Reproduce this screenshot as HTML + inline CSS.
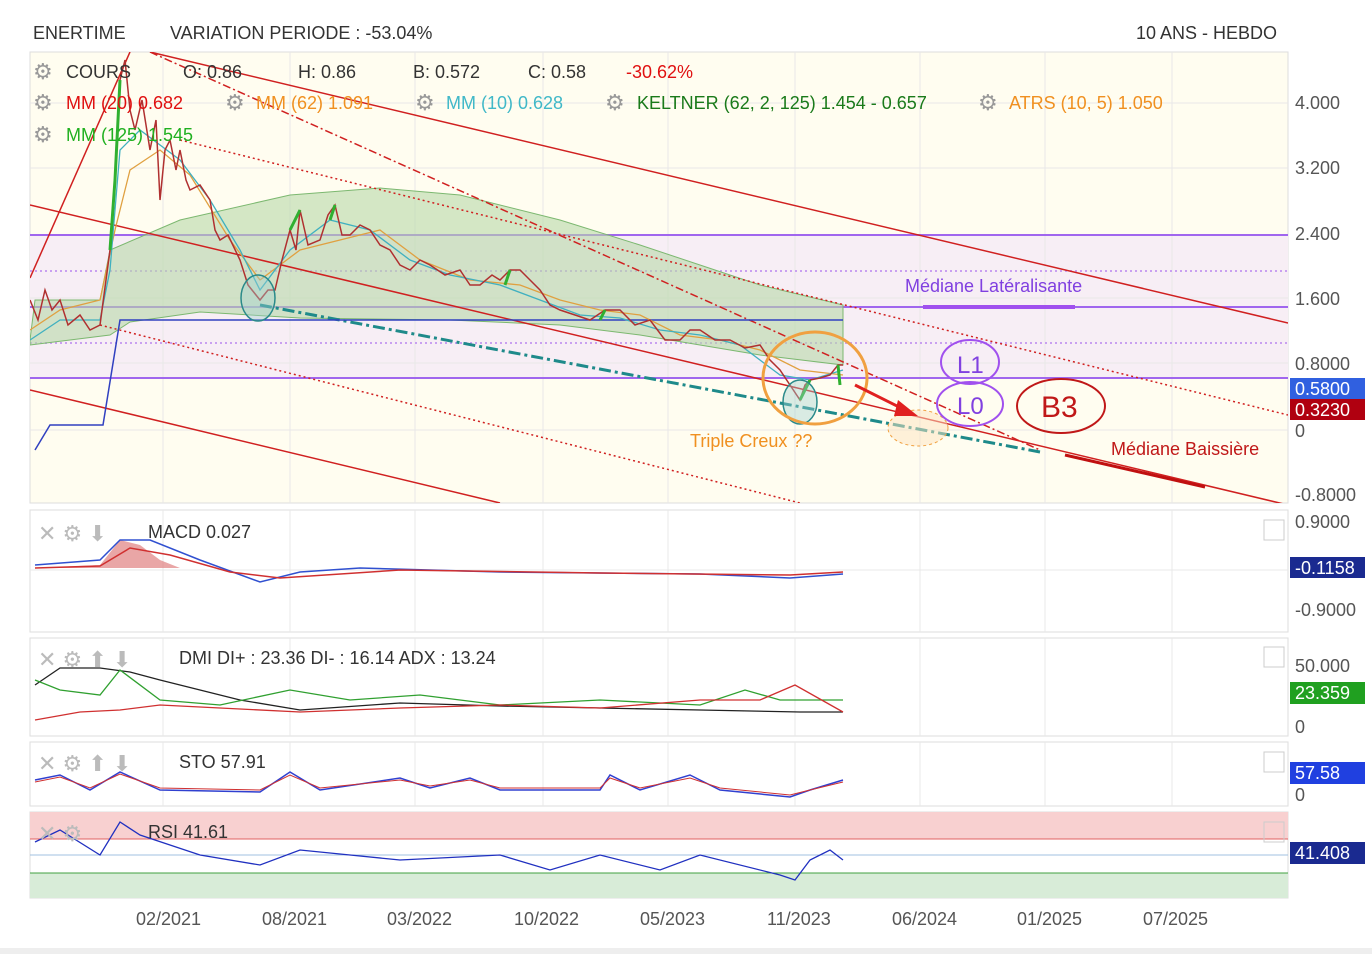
<!DOCTYPE html>
<html><head><meta charset="utf-8"><style>
body{margin:0;width:1372px;height:954px;background:#fff;font-family:"Liberation Sans",sans-serif;overflow:hidden;position:relative}
.t{position:absolute;font-size:18px;white-space:nowrap;color:#333}
</style></head><body>
<div class="t" style="left:33px;top:23px">ENERTIME</div>
<div class="t" style="left:170px;top:23px">VARIATION PERIODE : -53.04%</div>
<div class="t" style="left:1136px;top:23px">10 ANS - HEBDO</div>
<svg width="1372" height="954" style="position:absolute;left:0;top:0" font-family="Liberation Sans, sans-serif">
<defs><clipPath id="m"><rect x="30" y="52" width="1258" height="451"/></clipPath></defs>
<rect x="30" y="52" width="1258" height="451" fill="#fffdf0" stroke="#ddd"/>
<g clip-path="url(#m)">
<rect x="30" y="235" width="1258" height="143" fill="#f7eef5"/>
<g stroke="#e8e8e8"><path d="M163 52V503M290 52V503M415 52V503M543 52V503M668 52V503M795 52V503M920 52V503M1045 52V503M1172 52V503M30 103H1288M30 168H1288M30 298H1288M30 363H1288M30 430H1288"/></g>
<path d="M30 235H1288M30 307H1288M30 378H1288" stroke="#a066ee" stroke-width="2"/>
<path d="M30 271H1288M30 343H1288" stroke="#c9a0f0" stroke-width="2" stroke-dasharray="2 3"/>
<path d="M30 340 L35 300 L100 300 L110 250 L180 220 L290 195 L380 188 L460 195 L560 220 L640 245 L700 265 L760 285 L843 305 L843 365 L760 355 L700 345 L640 335 L560 325 L450 320 L300 318 L200 312 L130 322 L110 335 L30 345Z" fill="#b8d8a8" fill-opacity=".6" stroke="#7cb870"/>
<g stroke="#d02020" stroke-width="1.5" fill="none">
<path d="M150 52L1288 323"/><path d="M30 205L1288 505"/><path d="M30 390L500 503"/><path d="M30 278L130 52"/>
<path d="M180 140L1288 415" stroke-dasharray="2 3"/><path d="M100 325L800 503" stroke-dasharray="2 3"/>
<path d="M150 52L1040 450" stroke-dasharray="8 3 2 3"/>
</g>
<path d="M1065 455L1205 487" stroke="#c01010" stroke-width="3"/>
<path d="M260 305L1040 452" stroke="#1e8a8a" stroke-width="3" stroke-dasharray="12 4 3 4"/>
<path d="M35 450L50 425L103 425L120 320L843 320" stroke="#3040c0" stroke-width="1.5" fill="none"/>
<path d="M30 330L60 310L100 300L115 230L130 170L160 150L190 175L230 240L260 280L300 250L340 240L380 230L420 260L470 280L520 285L560 300L600 310L640 315L680 335L720 340L760 350L800 370L843 375" stroke="#e0a040" fill="none" stroke-width="1.3"/>
<path d="M30 340L60 320L100 320L110 270L120 150L140 130L180 160L210 200L240 250L260 290L290 250L330 220L370 230L410 260L450 275L500 285L540 300L580 315L620 318L660 330L700 335L740 345L780 375L810 380L843 370" stroke="#40b0c0" fill="none" stroke-width="1.3"/>
<path d="M30 300L38 320L45 290L52 310L60 300L68 325L80 315L90 330L100 325L110 250L115 180L120 80L125 60L130 110L135 130L142 100L150 150L156 120L160 200L165 150L170 140L176 170L180 150L186 180L190 190L200 185L210 200L215 230L220 240L228 235L240 260L248 285L260 300L268 290L275 290L282 260L290 230L296 250L300 210L308 245L320 240L328 215L335 205L342 235L350 235L360 225L370 230L380 245L390 250L400 265L410 270L420 260L430 265L445 275L460 270L470 285L480 285L492 275L500 280L510 270L520 270L530 280L540 290L550 305L560 310L575 315L590 320L605 310L620 310L635 325L650 320L665 340L680 340L690 330L700 330L715 340L730 340L745 348L760 345L770 360L780 370L790 385L800 400L805 385L810 380L820 378L830 375L838 365L843 365" stroke="#b03030" fill="none" stroke-width="1.5"/>
<path d="M110 250L115 180L120 80M290 230L300 210M335 205L330 220M800 400L810 380M605 310L600 320M510 270L505 285M838 365L840 385" stroke="#30b030" stroke-width="3" fill="none"/>
<ellipse cx="258" cy="298" rx="17" ry="23" fill="#a0d0d0" fill-opacity=".4" stroke="#2a8a8a" stroke-width="1.5"/>
<ellipse cx="800" cy="402" rx="17" ry="22" fill="#a0d0d0" fill-opacity=".4" stroke="#2a8a8a" stroke-width="1.5"/>
<ellipse cx="815" cy="378" rx="52" ry="46" fill="none" stroke="#f0a040" stroke-width="3"/>
<ellipse cx="918" cy="428" rx="30" ry="18" fill="#fde4c0" fill-opacity=".5" stroke="#f0a040" stroke-dasharray="3 3"/>
<path d="M855 385L905 410" stroke="#e02020" stroke-width="3"/><path d="M898 400L918 416L894 416Z" fill="#e02020"/>
<path d="M923 307H1075" stroke="#a050ee" stroke-width="4"/>
<ellipse cx="970" cy="362" rx="29" ry="22" fill="none" stroke="#a050ee" stroke-width="2"/>
<ellipse cx="970" cy="404" rx="33" ry="22" fill="none" stroke="#a050ee" stroke-width="2"/>
<ellipse cx="1061" cy="406" rx="44" ry="27" fill="none" stroke="#c01818" stroke-width="2"/>
</g>
<g font-size="18">
<text x="905" y="292" fill="#8040e0">Médiane Latéralisante</text>
<text x="957" y="373" fill="#8040e0" font-size="24">L1</text>
<text x="957" y="414" fill="#8040e0" font-size="24">L0</text>
<text x="1041" y="417" fill="#c01818" font-size="30">B3</text>
<text x="690" y="447" fill="#f09020">Triple Creux ??</text>
<text x="1111" y="455" fill="#c01818">Médiane Baissière</text>
<text x="66" y="78" fill="#333">COURS</text><text x="183" y="78" fill="#333">O: 0.86</text><text x="298" y="78" fill="#333">H: 0.86</text><text x="413" y="78" fill="#333">B: 0.572</text><text x="528" y="78" fill="#333">C: 0.58</text><text x="626" y="78" fill="#e01010">-30.62%</text>
<text x="66" y="109" fill="#e01010">MM (20) 0.682</text><text x="256" y="109" fill="#f09020">MM (62) 1.091</text><text x="446" y="109" fill="#40b8c8">MM (10) 0.628</text><text x="637" y="109" fill="#1a7a1a">KELTNER (62, 2, 125) 1.454 - 0.657</text><text x="1009" y="109" fill="#f09020">ATRS (10, 5) 1.050</text>
<text x="66" y="141" fill="#20b020">MM (125) 1.545</text>
<g fill="#999" font-size="22"><text x="33" y="79">⚙</text><text x="33" y="110">⚙</text><text x="225" y="110">⚙</text><text x="415" y="110">⚙</text><text x="605" y="110">⚙</text><text x="978" y="110">⚙</text><text x="33" y="142">⚙</text></g>
<g fill="#555"><text x="1295" y="109">4.000</text><text x="1295" y="174">3.200</text><text x="1295" y="240">2.400</text><text x="1295" y="305">1.600</text><text x="1295" y="370">0.8000</text><text x="1295" y="437">0</text><text x="1295" y="501">-0.8000</text>
<text x="1295" y="528">0.9000</text><text x="1295" y="616">-0.9000</text><text x="1295" y="672">50.000</text><text x="1295" y="733">0</text><text x="1295" y="801">0</text></g>
</g>
<rect x="1290" y="378" width="75" height="21" fill="#3060e0"/><text x="1295" y="395" fill="#fff" font-size="18">0.5800</text>
<rect x="1290" y="399" width="75" height="21" fill="#b00010"/><text x="1295" y="416" fill="#fff" font-size="18">0.3230</text>
<!-- MACD -->
<rect x="30" y="510" width="1258" height="122" fill="#fff" stroke="#ddd"/>
<path d="M163 510V632M290 510V632M415 510V632M543 510V632M668 510V632M795 510V632M920 510V632M1045 510V632M1172 510V632M30 570H1288" stroke="#e8e8e8"/>
<path d="M35 568L100 565L120 540L140 545L160 560L180 568L40 568Z" fill="#e08080" opacity=".7"/>
<path d="M35 565L100 560L120 540L150 540L200 560L260 582L300 572L360 568L500 572L700 574L790 578L843 574" stroke="#3050d0" fill="none" stroke-width="1.5"/>
<path d="M35 568L100 566L130 548L170 555L230 572L280 578L400 570L600 573L790 575L843 572" stroke="#d03030" fill="none" stroke-width="1.5"/>
<rect x="1264" y="520" width="20" height="20" fill="none" stroke="#ccc"/>
<text x="148" y="538" font-size="18" fill="#333">MACD  0.027</text>
<text x="38" y="541" font-size="22" fill="#bbb">✕ ⚙ ⬇</text>
<rect x="1290" y="557" width="75" height="21" fill="#1a2a90"/><text x="1295" y="574" fill="#fff" font-size="18">-0.1158</text>
<!-- DMI -->
<rect x="30" y="638" width="1258" height="98" fill="#fff" stroke="#ddd"/>
<path d="M163 638V736M290 638V736M415 638V736M543 638V736M668 638V736M795 638V736M920 638V736M1045 638V736M1172 638V736" stroke="#e8e8e8"/>
<path d="M35 685L60 668L100 668L130 672L160 680L200 690L240 700L300 710L400 703L500 706L600 708L700 710L800 712L843 712" stroke="#222" fill="none" stroke-width="1.3"/>
<path d="M35 680L60 690L100 695L120 670L160 700L220 705L290 690L350 700L420 695L500 705L600 700L700 705L745 690L780 700L843 700" stroke="#30a030" fill="none" stroke-width="1.3"/>
<path d="M35 720L80 712L120 710L160 705L220 708L300 712L400 708L500 705L600 708L700 700L760 700L795 685L843 712" stroke="#d03030" fill="none" stroke-width="1.3"/>
<rect x="1264" y="647" width="20" height="20" fill="none" stroke="#ccc"/>
<text x="179" y="664" font-size="18" fill="#333">DMI  DI+ : 23.36 DI- : 16.14 ADX : 13.24</text>
<text x="38" y="667" font-size="22" fill="#bbb">✕ ⚙ ⬆ ⬇</text>
<rect x="1290" y="682" width="75" height="22" fill="#20a020"/><text x="1295" y="699" fill="#fff" font-size="18">23.359</text>
<!-- STO -->
<rect x="30" y="742" width="1258" height="64" fill="#fff" stroke="#ddd"/>
<path d="M163 742V806M290 742V806M415 742V806M543 742V806M668 742V806M795 742V806M920 742V806M1045 742V806M1172 742V806" stroke="#e8e8e8"/>
<path d="M35 780L60 775L90 790L120 772L160 790L260 792L290 772L320 790L400 778L430 788L470 778L500 790L600 790L610 775L640 790L690 775L720 790L790 797L810 790L843 780" stroke="#3040d0" fill="none" stroke-width="1.5"/>
<path d="M35 782L60 777L90 788L120 774L160 788L260 790L290 775L320 788L400 780L430 786L470 780L500 788L600 788L610 778L640 788L690 778L720 788L790 795L810 790L843 782" stroke="#d03030" fill="none" stroke-width="1"/>
<rect x="1264" y="752" width="20" height="20" fill="none" stroke="#ccc"/>
<text x="179" y="768" font-size="18" fill="#333">STO  57.91</text>
<text x="38" y="771" font-size="22" fill="#bbb">✕ ⚙ ⬆ ⬇</text>
<rect x="1290" y="762" width="75" height="22" fill="#2040e0"/><text x="1295" y="779" fill="#fff" font-size="18">57.58</text>
<!-- RSI -->
<rect x="30" y="812" width="1258" height="86" fill="#fff" stroke="#ddd"/>
<rect x="30" y="812" width="1258" height="27" fill="#f8d0d0"/>
<rect x="30" y="873" width="1258" height="25" fill="#d8ecd8"/>
<path d="M30 839H1288" stroke="#e06060"/><path d="M30 873H1288" stroke="#40a040"/><path d="M30 855H1288" stroke="#a0c0e0"/>
<path d="M35 842L60 830L100 855L120 822L140 835L200 855L260 865L300 850L350 855L400 860L500 855L550 870L600 855L660 870L700 855L780 875L795 880L810 860L830 850L843 860" stroke="#2030c0" fill="none" stroke-width="1.3"/>
<rect x="1264" y="822" width="20" height="20" fill="none" stroke="#ccc"/>
<text x="148" y="838" font-size="18" fill="#333">RSI  41.61</text>
<text x="38" y="841" font-size="22" fill="#bbb">✕ ⚙</text>
<rect x="1290" y="842" width="75" height="22" fill="#1a2a90"/><text x="1295" y="859" fill="#fff" font-size="18">41.408</text>
<g font-size="18" fill="#555"><text x="136" y="925">02/2021</text><text x="262" y="925">08/2021</text><text x="387" y="925">03/2022</text><text x="514" y="925">10/2022</text><text x="640" y="925">05/2023</text><text x="767" y="925">11/2023</text><text x="892" y="925">06/2024</text><text x="1017" y="925">01/2025</text><text x="1143" y="925">07/2025</text></g>
<rect x="0" y="948" width="1372" height="6" fill="#eee"/>
</svg>
</body></html>
